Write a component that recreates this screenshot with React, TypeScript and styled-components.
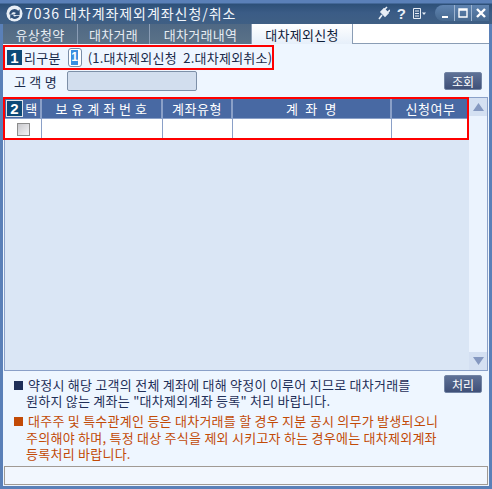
import React from "react"
import styled, { createGlobalStyle } from "styled-components"

const Global = createGlobalStyle`
  html, body { margin: 0; padding: 0; background: #5a80b8; }
  body { font-family: "Noto Sans CJK KR", "Liberation Sans", sans-serif; }
`

const tabs = ["유상청약", "대차거래", "대차거래내역", "대차제외신청"]
const columns = [
  { label: "", width: 37 },
  { label: "보 유 계 좌 번 호", width: 121 },
  { label: "계좌유형", width: 70 },
  { label: "계  좌  명", width: 159 },
  { label: "신청여부", width: 77 },
]

export default function App() {
  return (
    <>
      <Global />
      <Window>
        <TitleBar>
          <Logo viewBox="0 0 18 18">
            <circle cx="9" cy="9" r="8.500" fill="#e8eef6" />
            <path d="M3.500 10a5.500 5.500 0 0 1 9.500-4l1.500-1.500v6h-6l2-2a3 3 0 0 0-5 1.500z" fill="#2f4f78" />
            <path d="M14.500 11.500a5.500 5.500 0 0 1-8.500 2l-1.500 1v-4.500h4.500l-1.500 1.500a3 3 0 0 0 3.500 0z" fill="#2f4f78" />
          </Logo>
          <Title>7036 대차계좌제외계좌신청/취소</Title>
          <Tools>
            <svg width="12" height="14" viewBox="0 0 12 14">
              <path d="M1 13l3-4M3 6l4 4 3-3-4-4zM7 3l2-2M10 6l2-2" stroke="#e8eef6" strokeWidth="1.600" fill="#e8eef6" />
            </svg>
            <Help>?</Help>
            <svg width="13" height="11" viewBox="0 0 13 11">
              <path d="M.5.500h7v10h-7zM2 3h4M2 5.500h4M2 8h4" fill="none" stroke="#e8eef6" />
              <path d="M9 4.500h4l-2 2.500z" fill="#e8eef6" />
            </svg>
          </Tools>
          <WindowButtons>
            <WindowButton $first $width={19}>
              <svg width="10" height="10" viewBox="0 0 10 10"><path d="M2 8h6v2H2z" fill="#fff" /></svg>
            </WindowButton>
            <WindowButton $width={17}>
              <svg width="10" height="10" viewBox="0 0 10 10"><path d="M1 1h8v8H1zM1 2h8" fill="none" stroke="#fff" strokeWidth="1.400" /></svg>
            </WindowButton>
            <WindowButton $width={18}>
              <svg width="10" height="10" viewBox="0 0 10 10"><path d="M1 1l8 8M9 1l-8 8" stroke="#fff" strokeWidth="2.400" /></svg>
            </WindowButton>
          </WindowButtons>
        </TitleBar>

        <TabBar>
          {tabs.map((tab, i) => (
            <TabItem key={tab} $active={i === 3} $width={[75, 72, 102, 101][i]}>
              {tab}
            </TabItem>
          ))}
          <TabFill />
        </TabBar>

        <Content>
          <Annotated>
            <Badge>1</Badge>
            <span>리구분</span>
            <CodeInput>
              <Selected>1</Selected>
            </CodeInput>
            <span>(1.대차제외신청&nbsp;&nbsp;2.대차제외취소)</span>
          </Annotated>

          <SearchRow>
            <FieldLabel>고 객 명</FieldLabel>
            <NameField />
            <ActionButton>조회</ActionButton>
          </SearchRow>

          <GridArea>
            <GridMain>
              <HeaderRow>
                {columns.map((col, i) => (
                  <HeaderCell key={i} $width={col.width}>
                    {i === 0 ? <Badge $small>2</Badge> : null}
                    {i === 0 ? "택" : col.label}
                  </HeaderCell>
                ))}
              </HeaderRow>
              <BodyRow>
                {columns.map((col, i) => (
                  <BodyCell key={i} $width={col.width}>
                    {i === 0 ? <CheckBox /> : null}
                  </BodyCell>
                ))}
              </BodyRow>
            </GridMain>
            <Scrollbar>
              <ScrollButton>
                <svg width="11" height="8" viewBox="0 0 11 8"><path d="M5.500 0L11 8H0z" fill="#8598c0" /></svg>
              </ScrollButton>
              <ScrollButton>
                <svg width="11" height="8" viewBox="0 0 11 8"><path d="M5.500 8L11 0H0z" fill="#8598c0" /></svg>
              </ScrollButton>
            </Scrollbar>
            <RedFrame />
          </GridArea>

          <Notes>
            <NoteColumn>
              <Note $color="#1f2f58">
                <Bullet />
                약정시 해당 고객의 전체 계좌에 대해 약정이 이루어 지므로 대차거래를
                <br />
                원하지 않는 계좌는 "대차제외계좌 등록" 처리 바랍니다.
              </Note>
              <Note $color="#c24a06">
                <Bullet />
                대주주 및 특수관계인 등은 대차거래를 할 경우 지분 공시 의무가 발생되오니
                <br />
                주의해야 하며, 특정 대상 주식을 제외 시키고자 하는 경우에는 대차제외계좌
                <br />
                등록처리 바랍니다.
              </Note>
            </NoteColumn>
            <ActionButton>처리</ActionButton>
          </Notes>

          <StatusBar />
        </Content>
      </Window>
    </>
  )
}

const Window = styled.div`
  width: 492px;
  height: 489px;
  box-sizing: border-box;
  background: #5a80b8;
  padding: 0 3px 3px;
  display: flex;
  flex-direction: column;
  overflow: hidden;
`

const TitleBar = styled.div`
  height: 24px;
  flex: none;
  margin: 0 -3px;
  padding: 0 3px 0 6px;
  display: flex;
  align-items: center;
  background: linear-gradient(#5a80b8 0, #5a80b8 3px, #2d5078 4px, #3b5c86 13px, #3f5f84 24px);
  color: #fff;
`

const Logo = styled.svg`
  width: 17px;
  height: 17px;
  flex: none;
  margin-top: 2px;
`

const Title = styled.div`
  margin: 1px 0 0 2px;
  font-size: 14px;
  color: #f2f6fb;
  letter-spacing: 0.95px;
  flex: 1;
  white-space: nowrap;
`

const Tools = styled.div`
  display: flex;
  align-items: center;
  gap: 7px;
  margin: 2px 9px 0 0;
`

const Help = styled.span`
  font-family: "Liberation Sans", sans-serif;
  font-weight: bold;
  font-size: 15px;
  color: #e8eef6;
  line-height: 1;
`

const WindowButtons = styled.div`
  display: flex;
  height: 16px;
  margin-top: 1px;
`

const WindowButton = styled.div<{ $first?: boolean; $width: number }>`
  width: ${props => props.$width}px;
  height: 16px;
  box-sizing: border-box;
  display: flex;
  align-items: center;
  justify-content: center;
  background: linear-gradient(#5f83b0, #47698f);
  border-left: ${props => (props.$first ? "0" : "1px solid #9db4d0")};
  border-radius: ${props => (props.$first ? "8px 0 0 8px" : "0")};
`

const TabBar = styled.div`
  height: 20px;
  display: flex;
  background: #fff;
  flex: none;
`

const TabItem = styled.div<{ $active?: boolean; $width: number }>`
  width: ${props => props.$width}px;
  box-sizing: border-box;
  display: flex;
  align-items: center;
  justify-content: center;
  font-size: 13px;
  letter-spacing: 0.25px;
  color: ${props => (props.$active ? "#10203a" : "#e6ecf2")};
  background: ${props =>
    props.$active
      ? "linear-gradient(#fff, #e6effa)"
      : "linear-gradient(#4f6884, #5b7288)"};
  border-right: 1px solid #8a9db5;
`

const TabFill = styled.div`
  flex: 1;
  background: #fff;
  border-bottom: 1px solid #8a9db5;
`

const Content = styled.div`
  flex: 1;
  min-height: 0;
  background: #eef6ff;
  display: flex;
  flex-direction: column;
  font-size: 13px;
  letter-spacing: 0.25px;
  color: #1a2a4a;
`

const Annotated = styled.div`
  width: 271px;
  height: 25px;
  box-sizing: border-box;
  border: 2px solid #ff0000;
  margin-top: 1px;
  padding-left: 2px;
  display: flex;
  align-items: center;
  white-space: nowrap;
`

const Badge = styled.span<{ $small?: boolean }>`
  width: 15px;
  height: 15px;
  flex: none;
  display: inline-flex;
  align-items: center;
  justify-content: center;
  margin-right: ${props => (props.$small ? "3px" : "2px")};
  background: #0d4a78;
  color: #fff;
  font-family: "Liberation Sans", sans-serif;
  font-weight: bold;
  font-size: 15px;
  outline: ${props => (props.$small ? "1px solid #e0e4ea" : "none")};
`

const CodeInput = styled.span`
  width: 14px;
  height: 19px;
  box-sizing: border-box;
  flex: none;
  margin: 0 6px 0 7px;
  border: 1px solid #7a8ea8;
  border-radius: 3px;
  background: #fff;
  display: flex;
  align-items: center;
  justify-content: center;
`

const Selected = styled.span`
  width: 7px;
  height: 15px;
  background: #3a8ee0;
  color: #fff;
  font-family: "Liberation Sans", sans-serif;
  font-weight: bold;
  font-size: 12px;
  line-height: 15px;
  text-align: center;
`

const SearchRow = styled.div`
  height: 20px;
  margin-top: 1px;
  display: flex;
  align-items: center;
  flex: none;
`

const FieldLabel = styled.div`
  width: 64px;
  padding-left: 11px;
  box-sizing: border-box;
  white-space: nowrap;
`

const NameField = styled.div`
  width: 130px;
  height: 20px;
  box-sizing: border-box;
  background: #d2deee;
  border: 1px solid #7d90a8;
  border-radius: 2px;
`

const ActionButton = styled.div`
  width: 38px;
  height: 18px;
  box-sizing: border-box;
  flex: none;
  margin-left: auto;
  margin-right: 7px;
  display: flex;
  align-items: center;
  justify-content: center;
  font-size: 12px;
  letter-spacing: 0;
  color: #fff;
  border: 1px solid #7284a4;
  border-radius: 2px;
  background: linear-gradient(#5e7196, #3f5078);
`

const GridArea = styled.div`
  position: relative;
  height: 272px;
  margin: 6px 1px 0;
  display: flex;
  border: 1px solid #8aa0c8;
  background: #dae6f5;
  flex: none;
`

const GridMain = styled.div`
  flex: 1;
  min-width: 0;
`

const HeaderRow = styled.div`
  height: 20px;
  display: flex;
  background: #4869a3;
`

const HeaderCell = styled.div<{ $width: number }>`
  width: ${props => props.$width}px;
  box-sizing: border-box;
  flex: none;
  display: flex;
  align-items: center;
  justify-content: center;
  color: #fff;
  font-size: 13px;
  letter-spacing: 0.5px;
  white-space: pre;
  border-right: 2px solid #8aa0c8;
  &:last-child { border-right: 0; }
`

const BodyRow = styled.div`
  height: 20px;
  display: flex;
  background: #fff;
  border-top: 1px solid #8aa0c8;
`

const BodyCell = styled.div<{ $width: number }>`
  width: ${props => props.$width}px;
  box-sizing: border-box;
  flex: none;
  display: flex;
  align-items: center;
  justify-content: center;
  border-right: 1px solid #8aa0c8;
  &:last-child { border-right: 0; }
`

const CheckBox = styled.span`
  width: 13px;
  height: 13px;
  box-sizing: border-box;
  border: 1px solid #8c8c8c;
  background: linear-gradient(135deg, #c8c8cc, #f4f4f6);
`

const Scrollbar = styled.div`
  width: 18px;
  flex: none;
  display: flex;
  flex-direction: column;
  justify-content: space-between;
  background: #ebf3fe;
`

const ScrollButton = styled.div`
  height: 18px;
  display: flex;
  align-items: center;
  justify-content: center;
  background: #d4e0f2;
`

const RedFrame = styled.div`
  position: absolute;
  left: -2px;
  top: -1px;
  width: 466px;
  height: 43px;
  box-sizing: border-box;
  border: 2px solid #ff0000;
  pointer-events: none;
`

const Notes = styled.div`
  display: flex;
  align-items: flex-start;
  padding: 4px 0 0 23px;
  flex: 1;
`

const NoteColumn = styled.div`
  flex: 1;
  display: flex;
  flex-direction: column;
  gap: 3.500px;
  padding-top: 1.500px;
`

const Note = styled.div<{ $color: string }>`
  color: ${props => props.$color};
  line-height: 16.500px;
  white-space: nowrap;

  span {
    background: ${props => props.$color};
  }
`

const Bullet = styled.span`
  display: inline-block;
  width: 9px;
  height: 9px;
  margin: 0 5px 0 -12px;
`

const StatusBar = styled.div`
  height: 19px;
  flex: none;
  margin: 0 1px 1px;
  box-sizing: border-box;
  border: 1px solid #a09a94;
  background: #f2f7fe;
`
